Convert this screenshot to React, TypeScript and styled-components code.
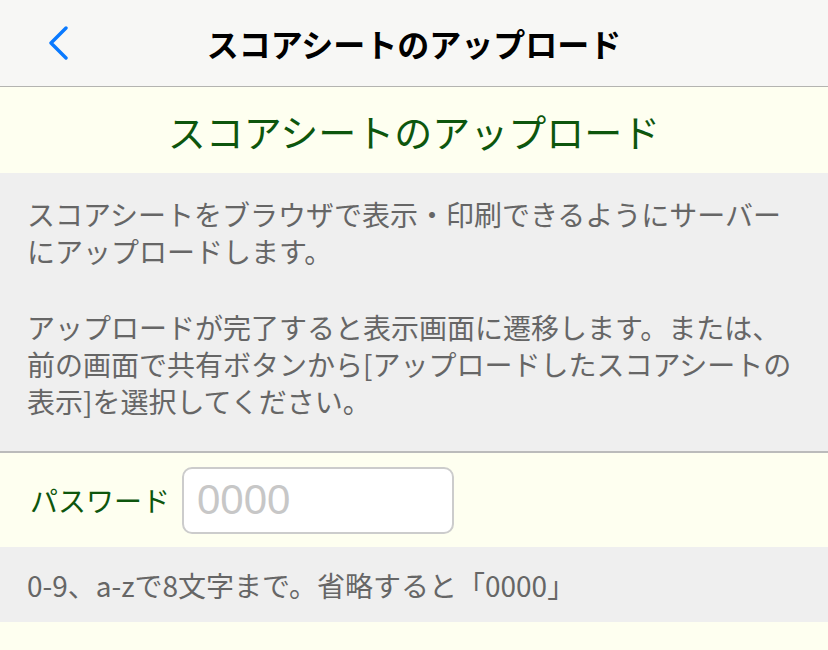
import styled, { createGlobalStyle } from 'styled-components';

const GlobalStyle = createGlobalStyle`
  html, body {
    margin: 0;
    padding: 0;
    background: #fefff0;
  }
  body {
    font-family: "Noto Sans CJK JP", "Noto Sans", sans-serif;
  }
`;

const Page = styled.div`
  width: 828px;
  min-height: 650px;
  background: #fefff0;
`;

const NavBar = styled.header`
  height: 86px;
  background: #f7f7f5;
  border-bottom: 1px solid #b4b4b0;
  display: grid;
  grid-template-columns: 100px 1fr 100px;
  align-items: center;
`;

const BackButton = styled.button`
  border: none;
  background: none;
  padding: 0 0 0 48px;
  height: 86px;
  display: flex;
  align-items: center;
  cursor: pointer;
`;

const NavTitle = styled.h1`
  margin: 0;
  text-align: center;
  font-size: 32px;
  font-weight: 700;
  color: #000;
  line-height: 1;
`;

const Banner = styled.div`
  height: 86px;
  background: #fefff0;
  display: flex;
  align-items: center;
  justify-content: center;
  font-size: 38px;
  color: #0d560d;
`;

const Notes = styled.section`
  background: #efefef;
  padding: 23px 27px 31px;
  border-bottom: 2px solid #bbbbbb;
`;

const NoteText = styled.p`
  margin: 0;
  font-size: 28px;
  line-height: 37px;
  color: #666;
  & + & {
    margin-top: 39px;
  }
`;

const FieldRow = styled.div`
  height: 94px;
  background: #fefff0;
  display: flex;
  align-items: center;
  gap: 12px;
  padding-left: 30px;
`;

const FieldLabel = styled.label`
  font-size: 28px;
  color: #0d560d;
`;

const PasswordInput = styled.input`
  box-sizing: border-box;
  width: 272px;
  height: 67px;
  border: 2px solid #cccccc;
  border-radius: 10px;
  background: #fff;
  padding: 0 13px;
  font-family: "Liberation Sans", Arial, sans-serif;
  font-size: 42px;
  color: #333;
  outline: none;
  &::placeholder {
    color: #c7c7c7;
  }
`;

const Hint = styled.div`
  height: 75px;
  background: #efefef;
  display: flex;
  align-items: center;
  padding-left: 27px;
  font-size: 28px;
  color: #666;
`;

function ChevronLeft() {
  return (
    <svg width="20" height="34" viewBox="0 0 20 34">
      <path d="M18 2 L3 17 L18 32" fill="none" stroke="#0a7aff" strokeWidth="3.4" strokeLinecap="round" strokeLinejoin="round" />
    </svg>
  );
}

export default function App() {
  return (
    <Page>
      <GlobalStyle />
      <NavBar>
        <BackButton aria-label="戻る">
          <ChevronLeft />
        </BackButton>
        <NavTitle>スコアシートのアップロード</NavTitle>
        <span />
      </NavBar>
      <Banner>スコアシートのアップロード</Banner>
      <Notes>
        <NoteText>スコアシートをブラウザで表示・印刷できるようにサーバーにアップロードします。</NoteText>
        <NoteText>アップロードが完了すると表示画面に遷移します。または、前の画面で共有ボタンから[アップロードしたスコアシートの表示]を選択してください。</NoteText>
      </Notes>
      <FieldRow>
        <FieldLabel htmlFor="pw">パスワード</FieldLabel>
        <PasswordInput id="pw" placeholder="0000" />
      </FieldRow>
      <Hint>0-9、a-zで8文字まで。省略すると「0000」</Hint>
    </Page>
  );
}
